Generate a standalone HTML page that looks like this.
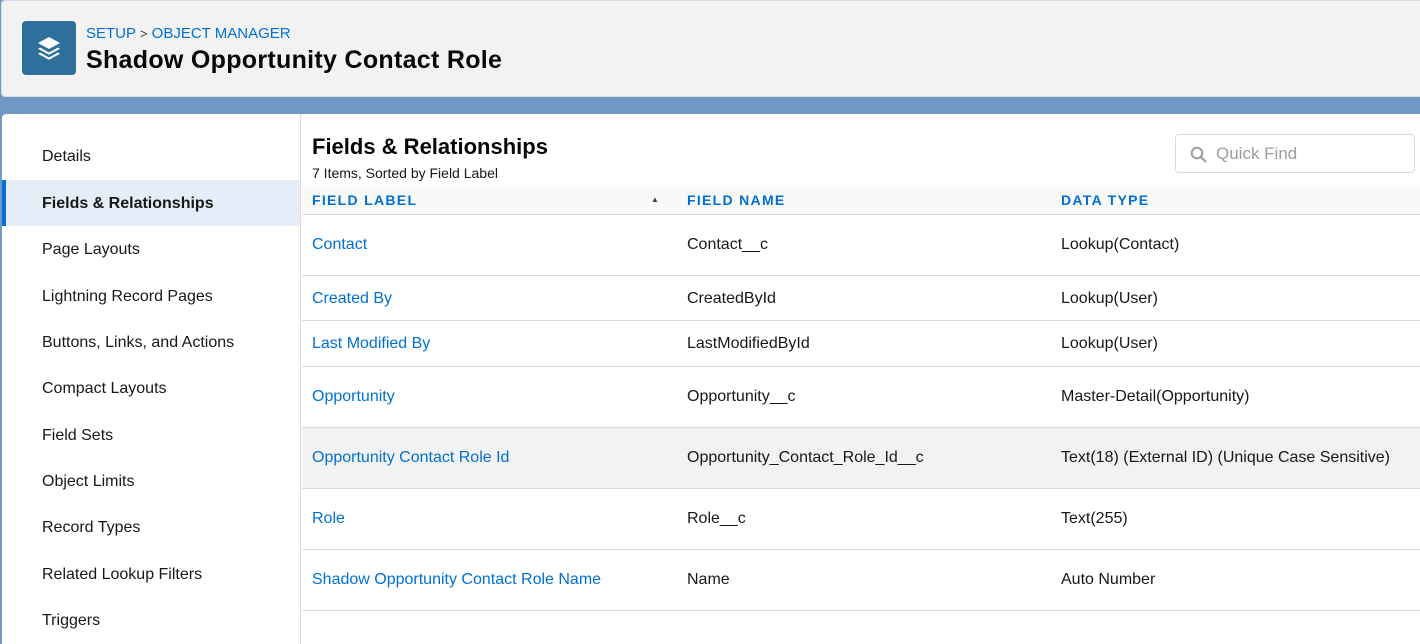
<!DOCTYPE html>
<html><head><style>
*{margin:0;padding:0;box-sizing:border-box}
body{width:1420px;height:637px;overflow:hidden;background:#6f98c6;font-family:"Liberation Sans",sans-serif;position:relative}
.hdr{position:absolute;left:1px;top:0;width:1430px;height:97px;background:#f3f2f2;border:1px solid #d8dde6;border-radius:4px}
.icon{position:absolute;left:20px;top:20px;width:54px;height:54px;background:#2e6f9c;border-radius:4px}
.bc{position:absolute;left:84px;top:24px;font-size:15px;color:#0070d2}
.bc span{color:#3e3e3c;font-size:13px}
.title{position:absolute;left:84px;top:45px;font-size:25px;font-weight:bold;color:#080707;letter-spacing:0.3px}
.main{position:absolute;left:2px;top:114px;width:1430px;height:530px;background:#fff;border-radius:4px 0 0 0}
.nav{position:absolute;left:0;top:0;width:299px;height:530px;border-right:1px solid #dddbda}
.nav p{position:absolute;left:40px;font-size:16px;color:#181818}
.sel{position:absolute;left:0;top:66px;width:298px;height:46px;background:#e4edf8;border-left:4px solid #0070d2}
.ct{position:absolute;left:300px;top:0;right:0;height:530px}
h2{position:absolute;left:10px;top:20px;font-size:22px;color:#080707}
.sub{position:absolute;left:10px;top:51px;font-size:14px;color:#181818}
.qf{position:absolute;left:873px;top:20px;width:240px;height:39px;border:1px solid #dddbda;border-radius:4px;font-size:17px;color:#a09c9a;padding:9px 0 0 40px}
.th{position:absolute;left:0;top:71px;width:1120px;height:30px;background:#f9f9f8;border-bottom:1px solid #dddbda;font-size:14px;font-weight:bold;color:#0070d2;letter-spacing:1.3px}
.th span{position:absolute;top:7px}
.row{position:absolute;left:0;width:1120px;border-bottom:1px solid #dddbda;font-size:16px;color:#181818}
.row span{position:absolute}
.row .a{color:#0070d2;left:10px}
</style></head><body>
<div class="hdr">
<div class="icon"><svg width="54" height="54" viewBox="0 0 54 54"><g fill="#fff"><path d="M27 16l11 6-11 6-11-6z"/><path d="M18 26.5l9 5 9-5 2 1.2-11 6-11-6z"/><path d="M18 31.5l9 5 9-5 2 1.2-11 6-11-6z"/></g></svg></div>
<div class="bc">SETUP <span>&gt;</span> OBJECT MANAGER</div>
<div class="title">Shadow Opportunity Contact Role</div>
</div>
<div class="main">
<div class="nav">
<div class="sel"></div>
<p style="top:34px">Details</p>
<p style="top:81px;font-weight:bold">Fields &amp; Relationships</p>
<p style="top:127px">Page Layouts</p>
<p style="top:174px">Lightning Record Pages</p>
<p style="top:220px">Buttons, Links, and Actions</p>
<p style="top:266px">Compact Layouts</p>
<p style="top:313px">Field Sets</p>
<p style="top:359px">Object Limits</p>
<p style="top:405px">Record Types</p>
<p style="top:452px">Related Lookup Filters</p>
<p style="top:498px">Triggers</p>
</div>
<div class="ct">
<h2>Fields &amp; Relationships</h2>
<div class="sub">7 Items, Sorted by Field Label</div>
<div class="qf"><svg style="position:absolute;left:14px;top:11px" width="17" height="17" viewBox="0 0 17 17"><circle cx="7" cy="7" r="5.3" fill="none" stroke="#a09c9a" stroke-width="2"/><path d="M11 11l5 5" stroke="#a09c9a" stroke-width="2.2"/></svg>Quick Find</div>
<div class="th"><span style="left:10px">FIELD LABEL</span><span style="left:349px;font-size:8px;top:10px;color:#3e3e3c">▲</span><span style="left:385px">FIELD NAME</span><span style="left:759px">DATA TYPE</span></div>
<div class="row" style="top:101px;height:61px"><span class="a" style="top:21px">Contact</span><span style="left:385px;top:21px">Contact__c</span><span style="left:759px;top:21px">Lookup(Contact)</span></div>
<div class="row" style="top:162px;height:45px"><span class="a" style="top:14px">Created By</span><span style="left:385px;top:14px">CreatedById</span><span style="left:759px;top:14px">Lookup(User)</span></div>
<div class="row" style="top:207px;height:46px"><span class="a" style="top:14px">Last Modified By</span><span style="left:385px;top:14px">LastModifiedById</span><span style="left:759px;top:14px">Lookup(User)</span></div>
<div class="row" style="top:253px;height:61px"><span class="a" style="top:21px">Opportunity</span><span style="left:385px;top:21px">Opportunity__c</span><span style="left:759px;top:21px">Master-Detail(Opportunity)</span></div>
<div class="row" style="top:314px;height:61px;background:#f3f2f2"><span class="a" style="top:21px">Opportunity Contact Role Id</span><span style="left:385px;top:21px">Opportunity_Contact_Role_Id__c</span><span style="left:759px;top:21px">Text(18) (External ID) (Unique Case Sensitive)</span></div>
<div class="row" style="top:375px;height:61px"><span class="a" style="top:21px">Role</span><span style="left:385px;top:21px">Role__c</span><span style="left:759px;top:21px">Text(255)</span></div>
<div class="row" style="top:436px;height:61px"><span class="a" style="top:21px">Shadow Opportunity Contact Role Name</span><span style="left:385px;top:21px">Name</span><span style="left:759px;top:21px">Auto Number</span></div>
</div>
</div>
</body></html>
